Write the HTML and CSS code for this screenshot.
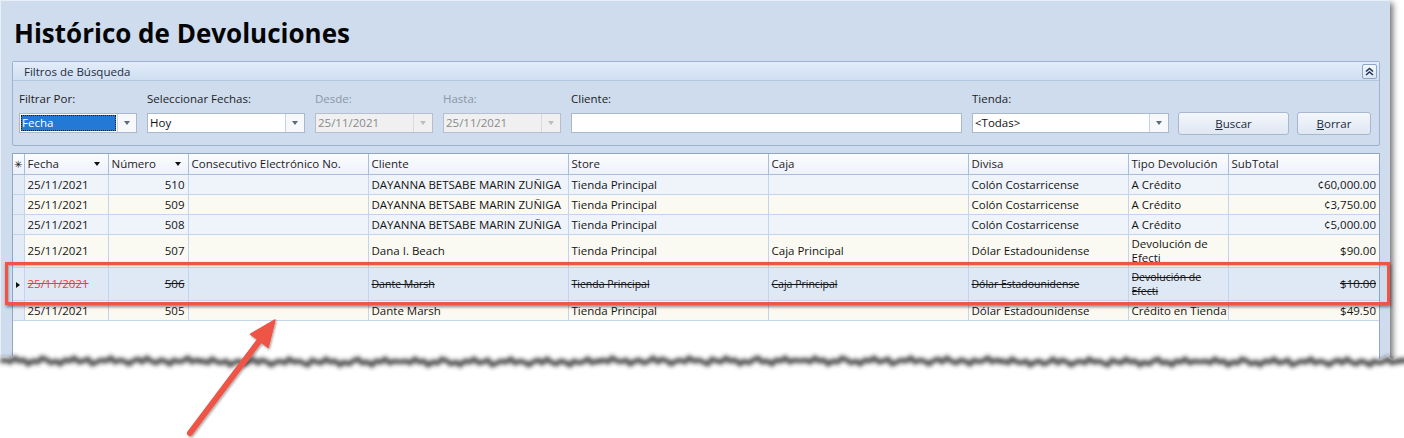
FILE: index.html
```html
<!DOCTYPE html>
<html lang="es">
<head>
<meta charset="utf-8">
<title>Histórico de Devoluciones</title>
<link rel="stylesheet" href="styles.css">
</head>
<body>
<div class="page">
  <div class="window">
    <h1 class="title">Histórico de Devoluciones</h1>
    <section class="group">
      <header class="group-head">
        <span>Filtros de Búsqueda</span>
        <button class="collapse" aria-label="Contraer">
          <svg width="11" height="11" viewBox="0 0 11 11"><path d="M2 5.5 L5.5 2.5 L9 5.5 M2 9 L5.5 6 L9 9" fill="none" stroke="#1d3558" stroke-width="1.6"/></svg>
        </button>
      </header>
      <div class="filters">
        <div class="field w118">
          <label>Filtrar Por:</label>
          <div class="combo"><span class="val focus"><span>Fecha</span></span><span class="drop"><i></i></span></div>
        </div>
        <div class="field w158">
          <label>Seleccionar Fechas:</label>
          <div class="combo"><span class="val">Hoy</span><span class="drop"><i></i></span></div>
        </div>
        <div class="field w118 disabled">
          <label>Desde:</label>
          <div class="combo"><span class="val">25/11/2021</span><span class="drop"><i></i></span></div>
        </div>
        <div class="field w118 disabled">
          <label>Hasta:</label>
          <div class="combo"><span class="val">25/11/2021</span><span class="drop"><i></i></span></div>
        </div>
        <div class="field w391">
          <label>Cliente:</label>
          <div class="textbox"></div>
        </div>
        <div class="field w197">
          <label>Tienda:</label>
          <div class="combo"><span class="val">&lt;Todas&gt;</span><span class="drop"><i></i></span></div>
        </div>
        <div class="actions">
          <button class="btn w111"><u>B</u>uscar</button>
          <button class="btn w74"><u>B</u>orrar</button>
        </div>
      </div>
    </section>
    <div class="grid">
      <table>
        <colgroup>
          <col class="c-ind"><col class="c-fecha"><col class="c-num"><col class="c-cons"><col class="c-cli"><col class="c-store"><col class="c-caja"><col class="c-div"><col class="c-tipo"><col class="c-sub">
        </colgroup>
        <thead>
          <tr>
            <th class="ind"><span class="star">✳</span></th>
            <th><div class="hc"><span>Fecha</span><span class="sort"></span></div></th>
            <th><div class="hc"><span>Número</span><span class="sort s2"></span></div></th>
            <th>Consecutivo Electrónico No.</th>
            <th>Cliente</th>
            <th>Store</th>
            <th>Caja</th>
            <th>Divisa</th>
            <th>Tipo Devolución</th>
            <th>SubTotal</th>
          </tr>
        </thead>
        <tbody>
          <tr class="odd">
            <td class="ind"></td><td>25/11/2021</td><td class="r">510</td><td></td><td>DAYANNA BETSABE MARIN ZUÑIGA</td><td>Tienda Principal</td><td></td><td>Colón Costarricense</td><td>A Crédito</td><td class="r">¢60,000.00</td>
          </tr>
          <tr class="even">
            <td class="ind"></td><td>25/11/2021</td><td class="r">509</td><td></td><td>DAYANNA BETSABE MARIN ZUÑIGA</td><td>Tienda Principal</td><td></td><td>Colón Costarricense</td><td>A Crédito</td><td class="r">¢3,750.00</td>
          </tr>
          <tr class="odd">
            <td class="ind"></td><td>25/11/2021</td><td class="r">508</td><td></td><td>DAYANNA BETSABE MARIN ZUÑIGA</td><td>Tienda Principal</td><td></td><td>Colón Costarricense</td><td>A Crédito</td><td class="r">¢5,000.00</td>
          </tr>
          <tr class="even tall">
            <td class="ind"></td><td>25/11/2021</td><td class="r">507</td><td></td><td>Dana I. Beach</td><td>Tienda Principal</td><td>Caja Principal</td><td>Dólar Estadounidense</td><td class="wrap"><div>Devolución de Efecti</div></td><td class="r">$90.00</td>
          </tr>
          <tr class="sel tall">
            <td class="ind"><span class="cur"></span></td><td class="void-date">25/11/2021</td><td class="r strike">506</td><td></td><td class="strike sm">Dante Marsh</td><td class="strike sm">Tienda Principal</td><td class="strike sm">Caja Principal</td><td class="strike sm">Dólar Estadounidense</td><td class="wrap strike sm"><div>Devolución de Efecti</div></td><td class="r strike">$10.00</td>
          </tr>
          <tr class="even">
            <td class="ind"></td><td>25/11/2021</td><td class="r">505</td><td></td><td>Dante Marsh</td><td>Tienda Principal</td><td></td><td>Dólar Estadounidense</td><td>Crédito en Tienda</td><td class="r">$49.50</td>
          </tr>
        </tbody>
      </table>
    </div>
  </div>

  <div class="callout"></div>

  <svg class="tear" width="1404" height="100" viewBox="0 0 1404 100">
    <defs>
      <path id="segfill" d="M0,18 L6,17 L10,19 L15,15 L19,18 L24,17 L28,21 L33,18 L38,19 L42,15 L47,17 L51,20 L56,18 L60,21 L65,17 L70,18 L74,15 L79,19 L83,18 L88,16 L92,21 L97,19 L101,17 L106,18 L111,15 L115,19 L120,17 L124,18 L129,21 L133,18 L138,16 L142,19 L147,15 L151,18 L156,20 L161,17 L165,18 L170,21 L174,17 L179,19 L183,18 L188,15 L192,19 L196,17 L201,18 L201,100 L0,100 Z"/>
      <path id="segline" d="M0,18 L6,17 L10,19 L15,15 L19,18 L24,17 L28,21 L33,18 L38,19 L42,15 L47,17 L51,20 L56,18 L60,21 L65,17 L70,18 L74,15 L79,19 L83,18 L88,16 L92,21 L97,19 L101,17 L106,18 L111,15 L115,19 L120,17 L124,18 L129,21 L133,18 L138,16 L142,19 L147,15 L151,18 L156,20 L161,17 L165,18 L170,21 L174,17 L179,19 L183,18 L188,15 L192,19 L196,17 L201,18"/>
      <filter id="tblur" x="-5%" y="-100%" width="110%" height="300%">
        <feGaussianBlur stdDeviation="2"/>
      </filter>
    </defs>
    <g fill="#ffffff">
      <use href="#segfill" transform="translate(0,0)"/>
      <use href="#segfill" transform="translate(400,1) scale(-1,1)"/>
      <use href="#segfill" transform="translate(400,1)"/>
      <use href="#segfill" transform="translate(800,0) scale(-1,1)"/>
      <use href="#segfill" transform="translate(800,0)"/>
      <use href="#segfill" transform="translate(1200,1) scale(-1,1)"/>
      <use href="#segfill" transform="translate(1200,1)"/>
      <use href="#segfill" transform="translate(1600,0) scale(-1,1)"/>
    </g>
    <g fill="none" stroke="#333333" stroke-width="5" stroke-opacity="0.85" filter="url(#tblur)">
      <g transform="translate(0,4)">
        <use href="#segline" transform="translate(0,0)"/>
        <use href="#segline" transform="translate(400,1) scale(-1,1)"/>
        <use href="#segline" transform="translate(400,1)"/>
        <use href="#segline" transform="translate(800,0) scale(-1,1)"/>
        <use href="#segline" transform="translate(800,0)"/>
        <use href="#segline" transform="translate(1200,1) scale(-1,1)"/>
        <use href="#segline" transform="translate(1200,1)"/>
        <use href="#segline" transform="translate(1600,0) scale(-1,1)"/>
      </g>
    </g>
  </svg>

  <svg class="arrow" width="1404" height="438" viewBox="0 0 1404 438">
    <defs>
      <filter id="ash" x="-20%" y="-20%" width="140%" height="140%">
        <feDropShadow dx="1" dy="1.5" stdDeviation="1.2" flood-color="#000" flood-opacity="0.35"/>
      </filter>
    </defs>
    <g filter="url(#ash)" fill="#ef5546" stroke="#ef5546">
      <line x1="190" y1="433" x2="260" y2="340" stroke-width="6" stroke-linecap="round"/>
      <polygon points="275,320 250.6,334.2 268.2,347.4" stroke-width="1.5" stroke-linejoin="round"/>
    </g>
  </svg>
</div>
</body>
</html>
```

FILE: styles.css
```css
* { box-sizing: border-box; }

html, body {
  margin: 0;
  padding: 0;
  background: #ffffff;
}

body {
  font-family: "Open Sans", "Noto Sans", sans-serif;
  font-size: 11.5px;
  color: #1a1a1a;
}

.page {
  position: relative;
  width: 1404px;
  height: 438px;
  overflow: hidden;
}

.window {
  width: 1390px;
  height: 380px;
  padding: 18px 10px 0 12px;
  background: #cfdcee;
  box-shadow: inset 1px 1px 0 #e9eff8, 3px 3px 6px rgba(0, 0, 0, 0.55);
}

.title {
  margin: 0 0 0 2px;
  font: 700 26px/31px "Open Sans", "Noto Sans", sans-serif;
  color: #050505;
}

/* ---------- filter group ---------- */
.group {
  margin-top: 12px;
  border: 1px solid #9db2ce;
  border-radius: 2px;
}

.group-head {
  height: 19px;
  display: flex;
  align-items: center;
  justify-content: space-between;
  padding: 0 2px 0 11px;
  background: linear-gradient(#e3edf9, #cfdef1);
  border-bottom: 1px solid #b3c7e1;
  color: #1e2d42;
}

.collapse {
  width: 15px;
  height: 15px;
  padding: 0;
  display: flex;
  align-items: center;
  justify-content: center;
  border: 1px solid #8ea5c4;
  border-radius: 2px;
  background: linear-gradient(#f3f7fc, #dbe6f4);
}

.filters {
  display: flex;
  align-items: flex-end;
  gap: 10px;
  padding: 10px 7px 12px 6px;
}

.field label {
  display: block;
  height: 15px;
  line-height: 15px;
  margin: 0 0 7px 0;
  white-space: nowrap;
  color: #1c1c1c;
}

.w118 { width: 118px; }
.w158 { width: 158px; }
.w391 { width: 391px; }
.w197 { width: 197px; }
.w111 { width: 111px; }
.w74 { width: 74px; }

.combo, .textbox {
  display: flex;
  height: 20px;
  border: 1px solid #a9b8cd;
  background: #ffffff;
}

.combo .val {
  flex: 1;
  padding: 0 2px;
  line-height: 18px;
  white-space: nowrap;
  overflow: hidden;
  color: #111;
}

.combo .val.focus {
  padding: 1px;
}

.combo .val.focus span {
  display: block;
  height: 16px;
  line-height: 15px;
  padding: 0 1px;
  background: #2479d6;
  color: #ffffff;
  outline: 1px dotted #1a1a1a;
  outline-offset: -1px;
}

.combo .drop {
  width: 19px;
  display: flex;
  align-items: center;
  justify-content: center;
  border-left: 1px solid #c9d3e0;
  background: #f6f8fb;
}

.combo .drop i {
  width: 0;
  height: 0;
  border-left: 3.5px solid transparent;
  border-right: 3.5px solid transparent;
  border-top: 4px solid #5f6a78;
}

.disabled label { color: #8c96a4; }

.disabled .combo {
  background: #f0f0f0;
  border-color: #b6c0cc;
}

.disabled .combo .val { color: #8a8a8a; }

.disabled .combo .drop {
  background: #f0f0f0;
  border-left-color: #d6dbe1;
}

.disabled .combo .drop i { border-top-color: #b9bec5; }

.actions {
  display: flex;
  gap: 8px;
  margin-left: -1px;
  margin-bottom: -2px;
}

.btn {
  height: 23px;
  padding: 0;
  border: 1px solid #a7b8ce;
  border-radius: 3px;
  background: linear-gradient(#f4f7fb, #dfe7f2);
  font: inherit;
  color: #1b2a3d;
}

/* ---------- grid ---------- */
.grid {
  margin-top: 7px;
  height: 230px;
  border: 1px solid #8fa6c6;
  background: #ffffff;
}

table {
  width: 1366px;
  border-collapse: collapse;
  table-layout: fixed;
}

.c-ind { width: 11px; }
.c-fecha { width: 84px; }
.c-num { width: 80px; }
.c-cons { width: 180px; }
.c-cli { width: 200px; }
.c-store { width: 200px; }
.c-caja { width: 200px; }
.c-div { width: 160px; }
.c-tipo { width: 100px; }
.c-sub { width: 151px; }

th, td {
  padding: 0 3px;
  border: 1px solid #c3d5ee;
  white-space: nowrap;
  overflow: hidden;
  text-align: left;
  vertical-align: middle;
}

th:first-child, td:first-child { border-left: none; }
th:last-child, td:last-child { border-right: none; }
thead th { border-top: none; }

th {
  height: 20px;
  font-weight: 400;
  color: #1c1c1c;
  background: linear-gradient(#fbfcfe, #edf2f9);
  border-color: #a8bedc;
}

.hc {
  display: flex;
  align-items: center;
  justify-content: space-between;
}

.sort {
  width: 0;
  height: 0;
  border-left: 3.5px solid transparent;
  border-right: 3.5px solid transparent;
  border-top: 4px solid #111;
  margin-right: 5px;
}

.sort.s2 { margin-right: 4px; }

th.ind, td.ind {
  padding: 0;
  text-align: center;
}

.star {
  font: 700 10px/1 "DejaVu Sans", sans-serif;
  color: #222;
}

tbody td { height: 20px; color: #141414; }
tbody tr.tall td { height: 33px; }

tr.odd td { background: #eff3fa; }
tr.even td { background: #fbfaf2; }
tr.sel td { background: #dfe8f5; }
tr td.ind { background: #e3ebf6; }

td.r { text-align: right; }

td.wrap { white-space: normal; }
td.wrap div {
  line-height: 14px;
  max-height: 28px;
  overflow: hidden;
}

.strike { text-decoration: line-through; }
.sm { font-size: 10.5px; }

.void-date {
  color: #f23b3b;
  text-decoration: line-through;
}

.cur {
  display: inline-block;
  width: 0;
  height: 0;
  border-top: 3.5px solid transparent;
  border-bottom: 3.5px solid transparent;
  border-left: 4px solid #111;
}

/* ---------- annotations ---------- */
.callout {
  position: absolute;
  left: 5px;
  top: 262px;
  width: 1385px;
  height: 43px;
  border: 3px solid #ef5545;
  box-shadow: 1px 2px 3px rgba(0, 0, 0, 0.45), inset 1px 1px 2px rgba(0, 0, 0, 0.25);
  pointer-events: none;
}

.tear {
  position: absolute;
  left: 0;
  top: 339px;
  pointer-events: none;
}

.arrow {
  position: absolute;
  left: 0;
  top: 0;
  pointer-events: none;
}
```
